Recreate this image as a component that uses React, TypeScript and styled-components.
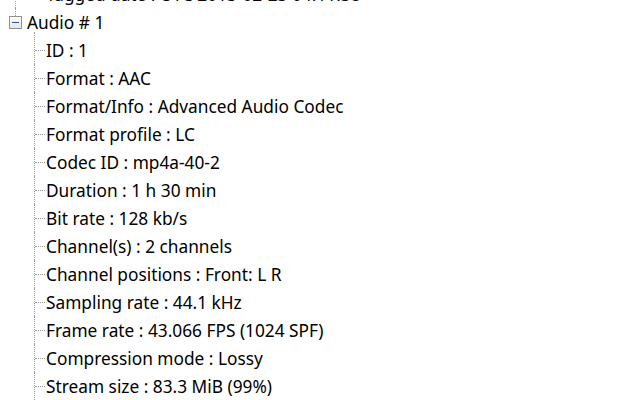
import React from "react";
import styled, { createGlobalStyle } from "styled-components";

const GlobalStyle = createGlobalStyle`
  html, body {
    margin: 0;
    padding: 0;
    background: #ffffff;
  }
  body {
    font-family: "Noto Sans", "Open Sans", sans-serif;
  }
`;

type TreeNode = {
  label: string;
  children?: string[];
};

const sections: TreeNode[] = [
  {
    label: "General",
    children: ["Tagged date : UTC 2013-02-23 04:11:38"],
  },
  {
    label: "Audio # 1",
    children: [
      "ID : 1",
      "Format : AAC",
      "Format/Info : Advanced Audio Codec",
      "Format profile : LC",
      "Codec ID : mp4a-40-2",
      "Duration : 1 h 30 min",
      "Bit rate : 128 kb/s",
      "Channel(s) : 2 channels",
      "Channel positions : Front: L R",
      "Sampling rate : 44.1 kHz",
      "Frame rate : 43.066 FPS (1024 SPF)",
      "Compression mode : Lossy",
      "Stream size : 83.3 MiB (99%)",
      "Default : Yes",
    ],
  },
];

const Viewport = styled.div`
  width: 620px;
  height: 400px;
  overflow: hidden;
  background: #ffffff;
`;

const TreeList = styled.ul`
  list-style: none;
  margin: -48px 0 0 0;
  padding: 0;
`;

const SectionItem = styled.li<{ $last: boolean }>`
  position: relative;

  &::before {
    content: "";
    position: absolute;
    left: 15px;
    top: 0;
    bottom: ${({ $last }) => ($last ? "auto" : "0")};
    height: ${({ $last }) => ($last ? "14px" : "auto")};
    border-left: 1px dotted #9a9a9a;
  }
`;

const SectionRow = styled.div`
  position: relative;
  display: flex;
  align-items: center;
  height: 28px;
  padding-left: 9px;
  gap: 5px;
`;

const ToggleBox = styled.span`
  position: relative;
  z-index: 1;
  box-sizing: border-box;
  width: 13px;
  height: 13px;
  border: 1px solid #919191;
  background: linear-gradient(#ffffff, #e6e6e6);
  display: flex;
  align-items: center;
  justify-content: center;

  &::after {
    content: "";
    width: 7px;
    height: 1px;
    background: #2b55a8;
  }
`;

const Label = styled.span`
  font-size: 17.3px;
  line-height: 28px;
  padding-top: 1px;
  color: #000000;
  white-space: nowrap;
`;

const ChildList = styled.ul`
  list-style: none;
  margin: 0;
  padding: 0;
`;

const ChildItem = styled.li<{ $last: boolean }>`
  position: relative;
  height: 28px;
  padding-left: 46px;
  display: flex;
  align-items: center;

  &::before {
    content: "";
    position: absolute;
    left: 34px;
    top: 0;
    height: ${({ $last }) => ($last ? "14px" : "28px")};
    border-left: 1px dotted #9a9a9a;
  }

  &:first-child::before {
    top: -4px;
    height: ${({ $last }) => ($last ? "18px" : "32px")};
  }

  &::after {
    content: "";
    position: absolute;
    left: 35px;
    top: 14px;
    width: 10px;
    border-top: 1px dotted #9a9a9a;
  }
`;

export default function App() {
  return (
    <Viewport>
      <GlobalStyle />
      <TreeList>
        {sections.map((section, i) => (
          <SectionItem key={section.label} $last={i === sections.length - 1}>
            <SectionRow>
              <ToggleBox />
              <Label>{section.label}</Label>
            </SectionRow>
            <ChildList>
              {(section.children ?? []).map((child, j, arr) => (
                <ChildItem key={child} $last={j === arr.length - 1}>
                  <Label>{child}</Label>
                </ChildItem>
              ))}
            </ChildList>
          </SectionItem>
        ))}
      </TreeList>
    </Viewport>
  );
}
